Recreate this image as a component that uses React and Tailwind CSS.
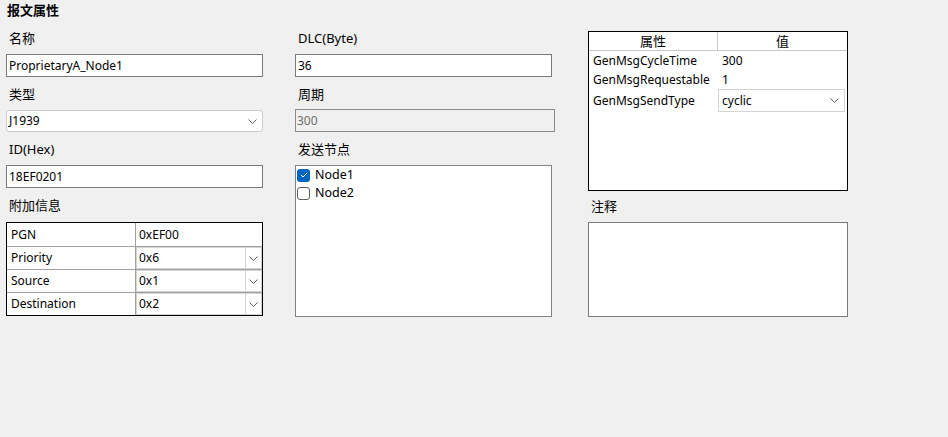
import React from 'react'

const font = { fontFamily: '"Noto Sans", "Noto Sans CJK SC", sans-serif' }

const Chevron = () => (
    <svg width="9" height="5" viewBox="0 0 9 5" className="shrink-0">
        <path d="M0.5 0.5 L4.5 4.5 L8.5 0.5" fill="none" stroke="#606060" strokeWidth="1" />
    </svg>
)

const Label = ({ children, h = 'h-[33px]', pt = 'pt-[9px]' }) => (
    <div className={`${h} ${pt} pl-[3px] text-[13px] leading-4`}>{children}</div>
)

const TextBox = ({ value, w = 'w-[257px]' }) => (
    <div className={`${w} h-[23px] border border-[#7a7a7a] bg-white pl-[2px] flex items-center leading-4`}>{value}</div>
)

const Combo = ({ value }) => (
    <div className="w-[257px] h-[22px] border border-[#cccccc] rounded-[3px] bg-white pl-[2px] pr-[5px] flex items-center justify-between leading-4">
        <span>{value}</span>
        <Chevron />
    </div>
)

const CellCombo = ({ value }) => (
    <div className="h-full border border-[#d4d4d4] bg-white flex items-stretch">
        <div className="flex-1 flex items-center pl-[2px]">{value}</div>
        <div className="w-[16px] border-l border-[#d4d4d4] flex items-center justify-center">
            <Chevron />
        </div>
    </div>
)

const extraRows = [
    { name: 'PGN', value: '0xEF00', combo: false, h: 'h-[24px] border-b border-[#a0a0a0]' },
    { name: 'Priority', value: '0x6', combo: true, h: 'h-[23px] border-b border-[#a0a0a0]' },
    { name: 'Source', value: '0x1', combo: true, h: 'h-[23px] border-b border-[#a0a0a0]' },
    { name: 'Destination', value: '0x2', combo: true, h: 'h-[22px]' },
]

const attrRows = [
    { name: 'GenMsgCycleTime', value: '300' },
    { name: 'GenMsgRequestable', value: '1' },
]

const Checkbox = ({ checked }) =>
    checked ? (
        <div className="w-[13px] h-[13px] rounded-[3px] bg-[#0067c0] flex items-center justify-center">
            <svg width="8" height="6" viewBox="0 0 8 6">
                <path d="M1 3 L3 5 L7 1" fill="none" stroke="white" strokeWidth="1" />
            </svg>
        </div>
    ) : (
        <div className="w-[13px] h-[13px] rounded-[3px] border border-[#5f5f5f] bg-white" />
    )

export default function App() {
    return (
        <div className="w-[948px] h-[437px] bg-[#f0f0f0] text-[12px] text-black overflow-hidden" style={font}>
            {/* Title */}
            <div className="h-[21px] pt-[2px] pl-[7px] text-[13px] font-bold leading-4">报文属性</div>

            <div className="flex pl-[6px] gap-[32px]">
                {/* Left column */}
                <div className="w-[257px] flex flex-col">
                    <Label>名称</Label>
                    <TextBox value="ProprietaryA_Node1" />
                    <Label>类型</Label>
                    <Combo value="J1939" />
                    <Label>ID(Hex)</Label>
                    <TextBox value="18EF0201" />
                    <Label h="h-[34px]">附加信息</Label>
                    <div className="border border-black bg-white">
                        {extraRows.map(r => (
                            <div key={r.name} className={`flex ${r.h}`}>
                                <div className="w-[129px] border-r border-[#a0a0a0] pl-[4px] flex items-center">{r.name}</div>
                                <div className="flex-1">
                                    {r.combo ? (
                                        <CellCombo value={r.value} />
                                    ) : (
                                        <div className="h-full flex items-center pl-[3px]">{r.value}</div>
                                    )}
                                </div>
                            </div>
                        ))}
                    </div>
                </div>

                {/* Middle column */}
                <div className="w-[260px] flex flex-col">
                    <Label>DLC(Byte)</Label>
                    <TextBox value="36" />
                    <Label h="h-[32px]">周期</Label>
                    <div className="w-[260px] h-[23px] border border-[#8c8c8c] bg-[#f0f0f0] text-[#6d6d6d] pl-[1px] flex items-center leading-4">300</div>
                    <Label>发送节点</Label>
                    <div className="w-[257px] h-[152px] border border-[#828282] bg-white pl-[1px]">
                        {[
                            { name: 'Node1', checked: true },
                            { name: 'Node2', checked: false },
                        ].map(n => (
                            <div key={n.name} className="h-[18px] flex items-center gap-[5px]">
                                <Checkbox checked={n.checked} />
                                <span className="leading-4 text-[12.5px]">{n.name}</span>
                            </div>
                        ))}
                    </div>
                </div>

                {/* Right column */}
                <div className="w-[260px] flex flex-col pt-[10px] ml-px">
                    <div className="h-[160px] border border-black bg-white flex flex-col">
                        <div className="h-[19px] flex border-b border-[#c8c8c8] text-[13px] leading-4">
                            <div className="w-[129px] border-r border-[#c8c8c8] flex items-center justify-center">属性</div>
                            <div className="flex-1 flex items-center justify-center">值</div>
                        </div>
                        {attrRows.map(r => (
                            <div key={r.name} className="h-[19px] flex">
                                <div className="w-[129px] pl-[4px] flex items-center">{r.name}</div>
                                <div className="flex-1 pl-[4px] flex items-center">{r.value}</div>
                            </div>
                        ))}
                        <div className="h-[23px] flex">
                            <div className="w-[129px] pl-[4px] flex items-center">GenMsgSendType</div>
                            <div className="w-[127px] border border-[#d4d4d4] bg-white flex items-center justify-between pl-[3px] pr-[5px]">
                                <span>cyclic</span>
                                <Chevron />
                            </div>
                        </div>
                    </div>
                    <Label h="h-[31px]" pt="pt-[7px]">注释</Label>
                    <div className="h-[95px] border border-[#7a7a7a] bg-white" />
                </div>
            </div>
        </div>
    )
}
